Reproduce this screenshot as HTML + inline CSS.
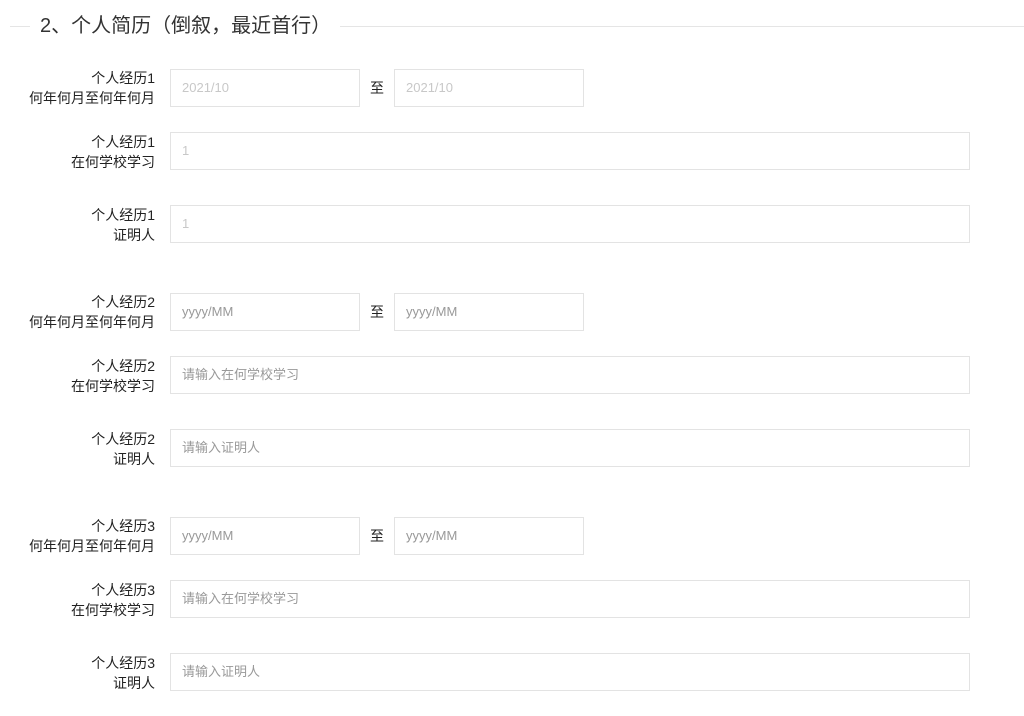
<!DOCTYPE html>
<html><head><meta charset="utf-8"><style>
body{margin:0;width:1024px;height:716px;background:#fff;font-family:"Liberation Sans","Noto Sans CJK SC",sans-serif;position:relative;overflow:hidden}
.hl{position:absolute;top:26px;height:1px;background:#e5e5e5}
.title{position:absolute;left:40px;top:12px;font-size:20px;color:#333;line-height:28px}
.lab{position:absolute;right:869px;width:160px;text-align:right;font-size:14px;line-height:20px;color:#222}
.in{position:absolute;box-sizing:border-box;height:38px;border:1px solid #e3e3e3;font-size:13px;line-height:36px;padding-left:11px;color:#999}
.in.d{color:#c8c8c8}
.zhi{position:absolute;left:370px;font-size:14px;color:#222;line-height:20px}
</style></head><body>
<div class="hl" style="left:10px;width:20px"></div>
<div class="hl" style="left:340px;width:684px"></div>
<div class="title">2、个人简历（倒叙，最近首行）</div>

<div class="lab" style="top:68px">个人经历1<br>何年何月至何年何月</div>
<div class="in d" style="left:170px;top:69px;width:190px">2021/10</div>
<div class="zhi" style="top:78px">至</div>
<div class="in d" style="left:394px;top:69px;width:190px">2021/10</div>
<div class="lab" style="top:132px">个人经历1<br>在何学校学习</div>
<div class="in d" style="left:170px;top:132px;width:800px">1</div>
<div class="lab" style="top:205px">个人经历1<br>证明人</div>
<div class="in d" style="left:170px;top:205px;width:800px">1</div>

<div class="lab" style="top:292px">个人经历2<br>何年何月至何年何月</div>
<div class="in" style="left:170px;top:293px;width:190px">yyyy/MM</div>
<div class="zhi" style="top:302px">至</div>
<div class="in" style="left:394px;top:293px;width:190px">yyyy/MM</div>
<div class="lab" style="top:356px">个人经历2<br>在何学校学习</div>
<div class="in" style="left:170px;top:356px;width:800px">请输入在何学校学习</div>
<div class="lab" style="top:429px">个人经历2<br>证明人</div>
<div class="in" style="left:170px;top:429px;width:800px">请输入证明人</div>

<div class="lab" style="top:516px">个人经历3<br>何年何月至何年何月</div>
<div class="in" style="left:170px;top:517px;width:190px">yyyy/MM</div>
<div class="zhi" style="top:526px">至</div>
<div class="in" style="left:394px;top:517px;width:190px">yyyy/MM</div>
<div class="lab" style="top:580px">个人经历3<br>在何学校学习</div>
<div class="in" style="left:170px;top:580px;width:800px">请输入在何学校学习</div>
<div class="lab" style="top:653px">个人经历3<br>证明人</div>
<div class="in" style="left:170px;top:653px;width:800px">请输入证明人</div>
</body></html>
